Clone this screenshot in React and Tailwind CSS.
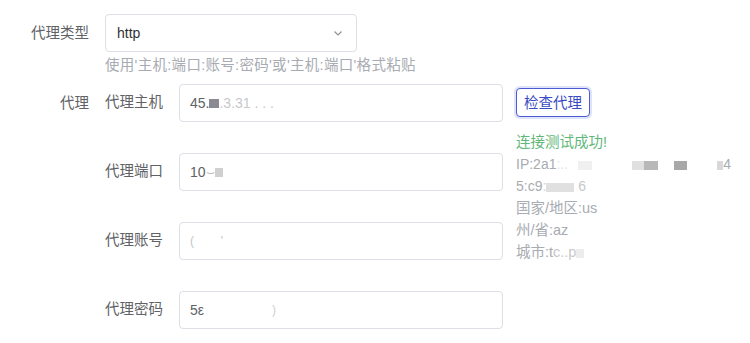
import React from 'react';

const font = "font-['Liberation_Sans','Noto_Sans_CJK_SC',sans-serif]";

const Field = ({ label, value, children }) => (
  <div className="flex items-center h-[38px]">
    <label className="w-[74px] pr-4 text-right text-[14.5px] text-[#606266] shrink-0">{label}</label>
    <div className="w-[324px] h-[38px] flex items-center px-[10px] border border-[#dcdfe6] rounded-[4px] bg-white text-sm text-[#606266]">
      {value}
      {children}
    </div>
  </div>
);

const Blur = ({ w, shade = 'bg-[#e8e8e8]' }) => (
  <span className={`inline-block h-[9px] align-middle ${shade}`} style={{ width: w }} />
);

const App = () => {
  return (
    <div className={`w-[750px] h-[343px] bg-white ${font} relative overflow-hidden`}>
      <div className="pt-[14px]">
        {/* proxy type */}
        <div className="flex">
          <label className="w-[105px] pr-4 text-right text-[14.5px] text-[#606266] leading-[38px] shrink-0">代理类型</label>
          <div>
            <div className="w-[252px] h-[38px] flex items-center justify-between pl-[11px] pr-[12px] border border-[#dcdfe6] rounded-[4px] text-sm text-[#303133]">
              <span>http</span>
              <svg width="12" height="12" viewBox="0 0 12 12" fill="none" stroke="#8f9399" strokeWidth="1.2">
                <path d="M2.5 4.5 L6 8 L9.5 4.5" />
              </svg>
            </div>
            <p className="mt-[3px] text-[14.5px] leading-5 text-[#a8abb2] tracking-[0.3px]">使用'主机:端口:账号:密码'或'主机:端口'格式粘贴</p>
          </div>
        </div>

        {/* proxy */}
        <div className="flex mt-[9px]">
          <label className="w-[105px] pr-4 text-right text-[14.5px] text-[#606266] leading-[38px] shrink-0">代理</label>
          <div className="flex flex-col gap-[31px]">
            <Field label="代理主机" value="45.">
              <Blur w={10} shade="bg-[#8a8a92]" />
              <span className="text-[#c8c8cc]">.3.31 . . .</span>
            </Field>
            <Field label="代理端口" value="10">
              <span className="text-[#c0c0c0]">⌣</span>
              <Blur w={8} shade="bg-[#d0d0d0]" />
            </Field>
            <Field label="代理账号" value="">
              <span className="text-[#c4c4c4] text-xs">(&nbsp;&nbsp;&nbsp;&nbsp;&nbsp;&nbsp;&nbsp;&nbsp;'</span>
            </Field>
            <Field label="代理密码" value="5ε">
              <span className="ml-[68px] text-[#d0d0d0] text-xs">)</span>
            </Field>
          </div>
          <div className="ml-[13px] pt-[4px] text-sm leading-[22px] text-[#a8abb2]">
            <button className="h-[29px] px-[7px] text-[14.5px] text-[#3b4bc2] border border-[#4b5bd6] rounded-[4px] ring-2 ring-[#dfe4fb] bg-white">
              检查代理
            </button>
            <div className="mt-[14px] text-[14.5px] text-[#5fb87a]">连接测试成功!</div>
            <div className="whitespace-nowrap">
              IP:2a1<span className="text-[#e4e4e4]">:..</span>
              <span className="ml-[10px]"><Blur w={14} shade="bg-[#f0f0f0]" /></span>
              <span className="ml-[40px]"><Blur w={12} shade="bg-[#e0e0e0]" /><Blur w={14} shade="bg-[#b8b8b8]" /></span>
              <span className="ml-[16px]"><Blur w={13} shade="bg-[#a8a8a8]" /></span>
              <span className="ml-[30px]"><Blur w={6} shade="bg-[#d8d8d8]" /></span>4
            </div>
            <div>
              5:c9<span className="text-[#d0d0d0]">:</span><Blur w={28} shade="bg-[#e0e0e0]" />
              <span className="ml-[4px] text-[#c8c8c8]">6</span>
            </div>
            <div className="text-[14.5px]">国家/地区:us</div>
            <div className="text-[14.5px]">州/省:az</div>
            <div className="text-[14.5px]">城市:t<span className="text-[#c8c8c8]">c..p</span><Blur w={8} shade="bg-[#ececec]" /></div>
          </div>
        </div>
      </div>
    </div>
  );
};

export default App;
